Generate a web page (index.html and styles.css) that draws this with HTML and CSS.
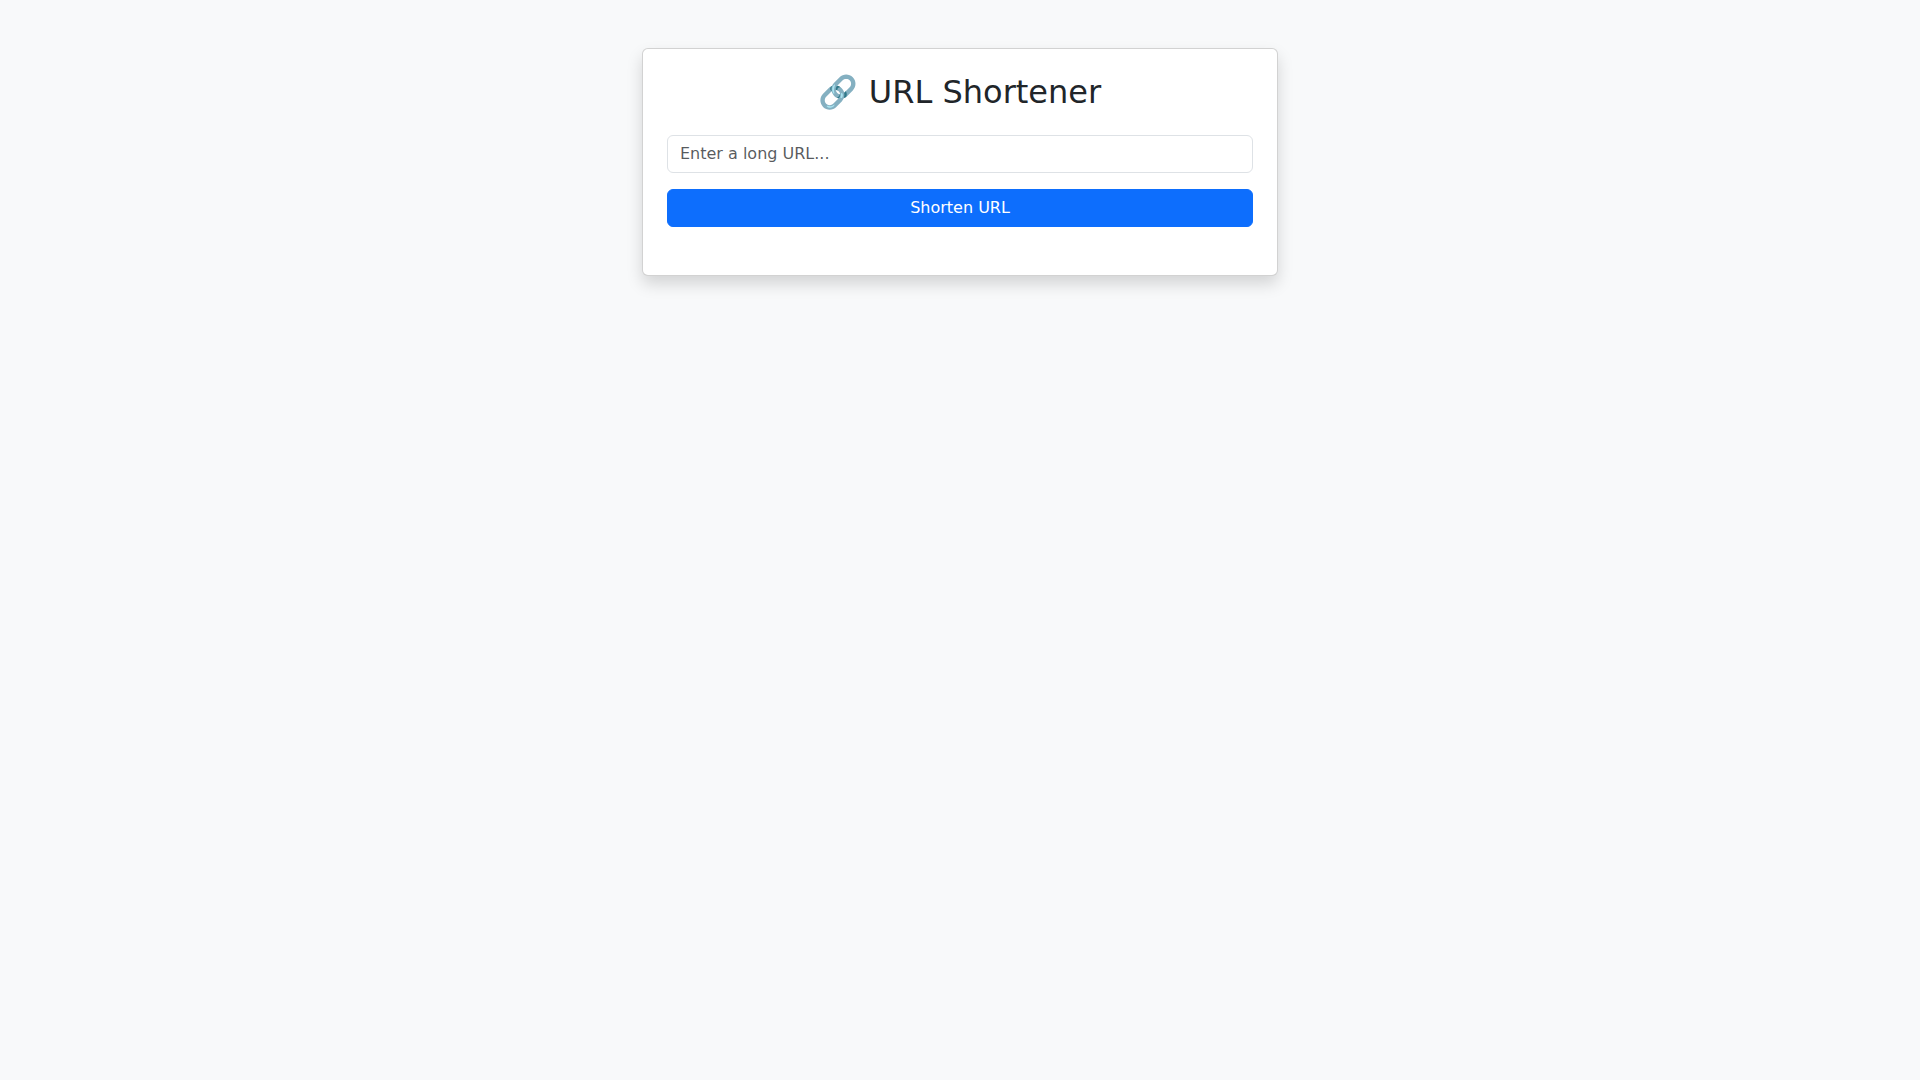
FILE: index.html
```html
<!DOCTYPE html>
<html lang="en">

<head>
    <meta charset="UTF-8">
    <meta name="viewport" content="width=device-width, initial-scale=1.0">
    <title>URL Shortener</title>
    <link rel="stylesheet" href="styles.css">
</head>

<body>

    <div class="container">
        <div class="card">
            <h2>🔗 URL Shortener</h2>
            <form id="urlForm">
                <input type="url" id="longUrl" name="longUrl" class="form-control" placeholder="Enter a long URL..." aria-label="Long URL" required>
                <button type="submit" class="btn">Shorten URL</button>
            </form>
            <div class="result" id="result"></div>
        </div>
    </div>

</body>

</html>
```
FILE: styles.css
```css
* {
    box-sizing: border-box;
}

body {
    font-family: "DejaVu Sans", "Noto Color Emoji", sans-serif;
    font-size: 16px;
    line-height: 24px;
    margin: 0;
    min-height: 100vh;
    color: #212529;
    background-color: #f8f9fa;
}

.container {
    max-width: 660px;
    margin: 0 auto;
    padding: 48px 12px;
}

.card {
    padding: 24px;
    background-color: #fff;
    border: 1px solid rgba(0, 0, 0, 0.175);
    border-radius: 6px;
    box-shadow: 0 8px 16px rgba(0, 0, 0, 0.15);
}

h2 {
    margin: 0 0 24px;
    font-size: 32px;
    font-weight: 500;
    line-height: 38px;
    text-align: center;
}

.form-control,
.btn {
    display: block;
    width: 100%;
    padding: 6px 12px;
    font-family: inherit;
    font-size: 16px;
    line-height: 24px;
    border: 1px solid #dee2e6;
    border-radius: 6px;
}

.form-control {
    margin-bottom: 16px;
    color: #212529;
    background-color: #fff;
}

.form-control::placeholder {
    color: rgba(33, 37, 41, 0.75);
    opacity: 1;
}

.btn {
    color: #fff;
    background-color: #0d6efd;
    border-color: #0d6efd;
    cursor: pointer;
}

.btn:hover {
    background-color: #0b5ed7;
}

.result {
    margin-top: 24px;
}
```
